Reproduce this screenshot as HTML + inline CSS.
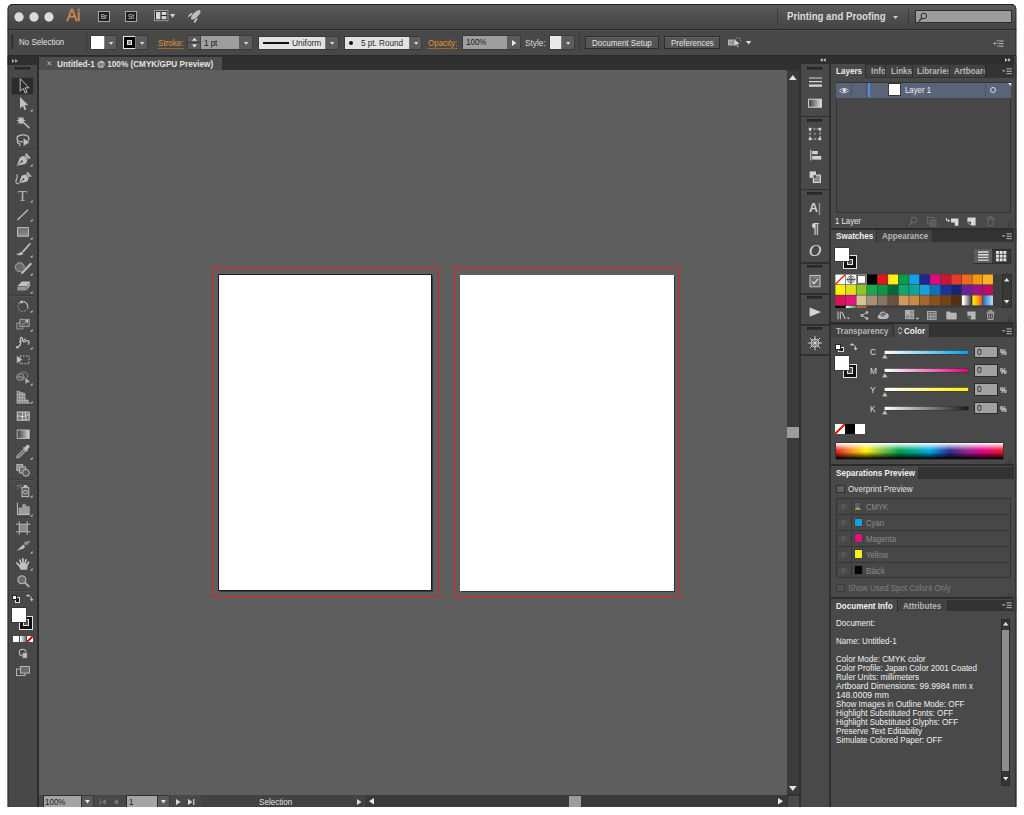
<!DOCTYPE html>
<html lang="en"><head><meta charset="utf-8"><title>Untitled-1 @ 100% (CMYK/GPU Preview)</title>
<style>
html,body{margin:0;padding:0;background:#fff}
body{width:1024px;height:815px;position:relative;overflow:hidden;font-family:"Liberation Sans",sans-serif;font-size:8px;color:#e4e4e4}
#win{position:absolute;left:0;top:0;width:1024px;height:815px;background:#484848;clip-path:inset(4px 7.700px 8px 7.600px round 5px 5px 0 0);overflow:hidden}
#win div,#win span,#win svg{position:absolute}
#win svg{overflow:visible}
.t,.u{white-space:nowrap;line-height:12px;height:12px;font-size:8px}
.t{font-size:9.12px;transform:scaleX(.877);transform-origin:0 50%}
.b{font-weight:bold}
</style></head>
<body>
<div id="win">
<!-- frame -->
<div style="left:0px;top:4px;width:1024px;height:25.5px;background:linear-gradient(#5b5b5b,#4f4f4f 45%,#444);border-top:1px solid #3a3a3a;box-sizing:border-box"></div>
<div style="left:0px;top:29px;width:1024px;height:1px;background:#262626"></div>
<div style="left:0px;top:30px;width:1024px;height:25px;background:#484848;border-top:1px solid #505050;box-sizing:border-box"></div>
<div style="left:0px;top:55px;width:1024px;height:1.5px;background:#2a2a2a"></div>
<div style="left:0px;top:56px;width:37px;height:751px;background:#484848"></div>
<div style="left:0px;top:56px;width:37px;height:8.5px;background:#2f2f2f"></div>
<div style="left:37px;top:56px;width:2px;height:751px;background:#2b2b2b"></div>
<div style="left:39px;top:56px;width:762px;height:14.5px;background:#303030"></div>
<div style="left:39px;top:57px;width:183px;height:13px;background:#4e4e4e;border-right:1px solid #2a2a2a"></div>
<div style="left:39px;top:70px;width:748px;height:725px;background:#5e5e5e"></div>
<div style="left:39px;top:795px;width:762px;height:12px;background:#484848"></div>
<div style="left:787px;top:70px;width:12px;height:725px;background:#3b3b3b"></div>
<div style="left:799px;top:56px;width:2px;height:751px;background:#2f2f2f"></div>
<div style="left:787px;top:427px;width:12px;height:11px;background:#9c9c9c"></div>
<div style="left:801px;top:56px;width:28px;height:751px;background:#494949"></div>
<div style="left:801px;top:56px;width:223px;height:8px;background:#2e2e2e"></div>
<div style="left:829px;top:56px;width:2px;height:751px;background:#2f2f2f"></div>
<div style="left:831px;top:64px;width:193px;height:743px;background:#494949"></div>
<div style="left:212px;top:267px;width:227px;height:330px;border:1px solid #d22;border-top:2px solid #a83c3c;border-bottom:1px solid #e02020;box-sizing:border-box"></div>
<div style="left:454px;top:267px;width:226px;height:330px;border:1px solid #d22;border-top:2px solid #a83c3c;border-bottom:1px solid #e02020;box-sizing:border-box"></div>
<div style="left:218.3px;top:274.2px;width:213.7px;height:316.8px;background:#fff;border:1px solid #1c1c1c;box-sizing:border-box;box-shadow:.6px .6px 1px rgba(0,0,0,.4)"></div>
<div style="left:460px;top:274.5px;width:214.3px;height:316px;background:#fff;box-shadow:0 0 1px 0.5px rgba(40,40,40,.8)"></div>
<!-- bars -->
<svg style="left:14px;top:12.3px" width="10" height="10" viewBox="0 0 10 10" ><circle cx="5" cy="5" r="4.650" fill="#dcdcdc"/></svg>
<svg style="left:29px;top:12.3px" width="10" height="10" viewBox="0 0 10 10" ><circle cx="5" cy="5" r="4.650" fill="#dcdcdc"/></svg>
<svg style="left:44px;top:12.3px" width="10" height="10" viewBox="0 0 10 10" ><circle cx="5" cy="5" r="4.650" fill="#dcdcdc"/></svg>
<span class="u" style="left:66.3px;top:5.300px;font-size:16.600px;line-height:22px;height:22px;color:#c98a55;letter-spacing:-0.5px;-webkit-text-stroke:.35px #c98a55">Ai</span>
<div style="left:97.8px;top:10.6px;width:12.3px;height:11.4px;background:#1f1f1f;border:1px solid #a8a8a8;box-sizing:border-box"><span class="u" style="left:0;top:0;width:10.3px;text-align:center;font-size:6.6px;line-height:9.6px;height:9.6px;color:#d4d4d4">Br</span></div>
<div style="left:124.9px;top:10.6px;width:12.3px;height:11.4px;background:#1f1f1f;border:1px solid #a8a8a8;box-sizing:border-box"><span class="u" style="left:0;top:0;width:10.3px;text-align:center;font-size:6.6px;line-height:9.6px;height:9.6px;color:#d4d4d4">St</span></div>
<svg style="left:153.8px;top:9.8px" width="14.4" height="11.2" viewBox="0 0 14.4 11.2" ><rect x=".5" y=".5" width="13.4" height="10.2" fill="#2e2e2e" stroke="#9c9c9c"/><rect x="2" y="1.9" width="4.4" height="7.4" fill="#d6d6d6"/><rect x="7.6" y="1.9" width="4.8" height="3.1" fill="#d6d6d6"/><rect x="7.600" y="6.100" width="4.800" height="3.200" fill="#d6d6d6"/></svg>
<svg style="left:169.8px;top:14.2px" width="5.2" height="3.8" viewBox="0 0 5.2 3.8" ><path d="M0 0h5.200L2.600 3.800z" fill="#d4d4d4"/></svg>
<svg style="left:186px;top:8px" width="16" height="16" viewBox="0 0 16 16" ><g fill="#bebebe"><ellipse cx="9.800" cy="6.800" rx="6.300" ry="2.500" transform="rotate(-45 9.800 6.800)"/><ellipse cx="4.300" cy="7" rx="2.700" ry="1" transform="rotate(-38 4.300 7)"/><ellipse cx="9.600" cy="12.300" rx="2.900" ry="1.100" transform="rotate(-55 9.600 12.300)"/></g></svg>
<div style="left:776.5px;top:9px;width:1px;height:16px;background:#3a3a3a"></div>
<span class="t b" style="left:786.5px;top:10px;font-size:11px;color:#dcdcdc">Printing and Proofing</span>
<svg style="left:892.8px;top:15.5px" width="5" height="3" viewBox="0 0 5 3" ><path d="M0 0h5L2.5 3z" fill="#d0d0d0"/></svg>
<div style="left:908px;top:9px;width:1px;height:16px;background:#3a3a3a"></div>
<div style="left:914.5px;top:10px;width:97.2px;height:13.4px;background:#9c9c9c;border:1px solid #2e2e2e;box-sizing:border-box"></div>
<svg style="left:917.5px;top:12px" width="10" height="10" viewBox="0 0 10 10" ><circle cx="5.8" cy="4" r="2.8" fill="none" stroke="#2a2a2a" stroke-width="1"/><path d="M3.8 6.2L.8 9.4" stroke="#2a2a2a" stroke-width="1.3"/></svg>
<svg style="left:11.2px;top:35px" width="3" height="15" viewBox="0 0 3 15" ><rect x="0" y="0.20" width="2.600" height="1" fill="#202020"/><rect x="0" y="2.25" width="2.600" height="1" fill="#202020"/><rect x="0" y="4.30" width="2.600" height="1" fill="#202020"/><rect x="0" y="6.35" width="2.600" height="1" fill="#202020"/><rect x="0" y="8.40" width="2.600" height="1" fill="#202020"/><rect x="0" y="10.45" width="2.600" height="1" fill="#202020"/><rect x="0" y="12.50" width="2.600" height="1" fill="#202020"/></svg>
<span class="t" style="left:18.8px;top:35.9px;color:#dfe3e8">No Selection</span>
<div style="left:86px;top:33px;width:1px;height:19px;background:#3a3a3a"></div>
<div style="left:91.4px;top:35.8px;width:13.8px;height:13.2px;background:#fff;box-shadow:0 0 0 0.6px #333"></div>
<div style="left:105.2px;top:35.8px;width:11.3px;height:13.2px;background:#5c5c5c;box-shadow:0 0 0 0.6px #333"></div>
<svg style="left:108.65px;top:41.5px" width="4.4" height="2.8" viewBox="0 0 4.4 2.8" ><path d="M0 0h4.400L2.200 2.800z" fill="#dedede"/></svg>
<div style="left:122.7px;top:35.8px;width:13.6px;height:13.2px;background:#000;border:1px solid #e8e8e8;box-sizing:border-box"><div style="left:3.3px;top:3.2px;width:5.5px;height:5.2px;border:1px solid #ddd;background:#888;box-sizing:border-box"></div>
</div>
<div style="left:136.3px;top:35.8px;width:11.2px;height:13.2px;background:#5c5c5c;box-shadow:0 0 0 0.6px #333"></div>
<svg style="left:139.7px;top:41.5px" width="4.4" height="2.8" viewBox="0 0 4.4 2.8" ><path d="M0 0h4.400L2.200 2.800z" fill="#dedede"/></svg>
<span class="t" style="left:157.8px;top:36.6px;color:#e8922a;border-bottom:1px dotted #e8922a;height:11px;line-height:12px;font-size:9.234px">Stroke:</span>
<div style="left:187.7px;top:35.8px;width:13.3px;height:13.2px;background:#5c5c5c;box-shadow:0 0 0 0.6px #333"></div>
<div style="left:187.7px;top:42.1px;width:13.3px;height:0.8px;background:#3a3a3a"></div>
<svg style="left:191.8px;top:37.8px" width="5" height="9.4" viewBox="0 0 5 9.4" ><path d="M0 2.8h5L2.5 0zM0 6.6h5L2.5 9.4z" fill="#e8e8e8"/></svg>
<div style="left:201px;top:35.8px;width:39.4px;height:13.2px;background:#9e9e9e;box-shadow:0 0 0 0.6px #333"></div>
<span class="t" style="left:204px;top:36.5px;color:#1a1a1a">1 pt</span>
<div style="left:240.4px;top:35.8px;width:11.6px;height:13.2px;background:#5c5c5c;box-shadow:0 0 0 0.6px #333"></div>
<svg style="left:244px;top:41.5px" width="4.4" height="2.8" viewBox="0 0 4.4 2.8" ><path d="M0 0h4.400L2.200 2.800z" fill="#dedede"/></svg>
<div style="left:258.8px;top:36.7px;width:67.3px;height:11.9px;background:#e2e2e2;box-shadow:0 0 0 0.6px #333"></div>
<div style="left:263.2px;top:41.6px;width:25.5px;height:2px;background:#111"></div>
<span class="t" style="left:292.2px;top:36.6px;color:#2a2a2a;font-size:9.576px">Uniform</span>
<div style="left:326.1px;top:36.7px;width:11.9px;height:11.9px;background:#5c5c5c;box-shadow:0 0 0 0.6px #333"></div>
<svg style="left:329.85px;top:41.75px" width="4.4" height="2.8" viewBox="0 0 4.4 2.8" ><path d="M0 0h4.400L2.200 2.800z" fill="#dedede"/></svg>
<div style="left:344.6px;top:36.7px;width:65.7px;height:11.9px;background:#e2e2e2;box-shadow:0 0 0 0.6px #333"></div>
<div style="left:349px;top:40.6px;width:4px;height:4px;background:#111;border-radius:50%"></div>
<span class="t" style="left:360.7px;top:36.6px;color:#2a2a2a;font-size:9.291px">5 pt. Round</span>
<div style="left:410.3px;top:36.7px;width:11.2px;height:11.9px;background:#5c5c5c;box-shadow:0 0 0 0.6px #333"></div>
<svg style="left:413.7px;top:41.75px" width="4.4" height="2.8" viewBox="0 0 4.4 2.8" ><path d="M0 0h4.400L2.200 2.800z" fill="#dedede"/></svg>
<span class="t" style="left:428.4px;top:36.6px;color:#e8922a;border-bottom:1px dotted #e8922a;height:11px;line-height:12px">Opacity:</span>
<div style="left:463.4px;top:35.8px;width:44.5px;height:13.2px;background:#9e9e9e;box-shadow:0 0 0 0.6px #333"></div>
<span class="t" style="left:465.5px;top:36.3px;color:#1a1a1a">100%</span>
<div style="left:507.9px;top:35.8px;width:11.7px;height:13.2px;background:#5c5c5c;box-shadow:0 0 0 0.6px #333"></div>
<svg style="left:512px;top:39.6px" width="4.4" height="6" viewBox="0 0 4.4 6" ><path d="M0 0v6L4.4 3z" fill="#e8e8e8"/></svg>
<span class="t" style="left:524.9px;top:36.6px;color:#dcdcdc;font-size:9.462px">Style:</span>
<div style="left:549.7px;top:35.8px;width:12.3px;height:13.2px;background:#e9e9e9;box-shadow:0 0 0 0.6px #333"></div>
<div style="left:562px;top:35.8px;width:12px;height:13.2px;background:#5c5c5c;box-shadow:0 0 0 0.6px #333"></div>
<svg style="left:565.8px;top:41.5px" width="4.4" height="2.8" viewBox="0 0 4.4 2.8" ><path d="M0 0h4.400L2.200 2.800z" fill="#dedede"/></svg>
<div style="left:579.3px;top:33px;width:1px;height:19px;background:#3a3a3a"></div>
<div style="left:584.8px;top:36.4px;width:74.2px;height:12.3px;background:#555;border:1px solid #2c2c2c;box-sizing:border-box;box-shadow:inset 0 1px 0 #666"></div>
<span class="t" style="left:592.2px;top:36.5px;color:#e2e2e2;font-size:9.177px">Document Setup</span>
<div style="left:664.3px;top:36.4px;width:55.7px;height:12.3px;background:#555;border:1px solid #2c2c2c;box-sizing:border-box;box-shadow:inset 0 1px 0 #666"></div>
<span class="t" style="left:670.7px;top:36.5px;color:#e2e2e2;font-size:9.063px">Preferences</span>
<svg style="left:728px;top:36.5px" width="14" height="12" viewBox="0 0 14 12" ><rect x=".5" y="3" width="7" height="5" fill="#9a9a9a" stroke="#c8c8c8" stroke-width=".8"/><path d="M6 2.2l6.2 4.6-2.8.3 1.4 3-1.2.5-1.4-3-2.2 1.9z" fill="#d8d8d8" stroke="#444" stroke-width=".4"/><path d="M8 1l4.5 0M12.5 1v3" stroke="#aaa" stroke-width=".8" fill="none" stroke-dasharray="1.2 1"/></svg>
<svg style="left:745.8px;top:40.6px" width="5.2" height="3.6" viewBox="0 0 5.2 3.6" ><path d="M0 0h5.2L2.6 3.6z" fill="#e0e0e0"/></svg>
<svg style="left:992.5px;top:39.5px" width="11" height="8" viewBox="0 0 11 8" ><path d="M0 2.800h3.400L1.700 4.800z" fill="#c4c4c4"/><path d="M5.400 1h5.200M5.400 3.600h5.200M5.400 6.200h5.200" stroke="#b8b8b8" stroke-width="1"/><path d="M4.200 0v7.200" stroke="#b8b8b8" stroke-width=".9" stroke-dasharray="1.200 1.400"/></svg>
<!-- tools -->
<svg style="left:11.8px;top:58.6px" width="6.4" height="3.8" viewBox="0 0 6.4 3.8" ><path d="M0 0v3.800L2.600 1.900zM3.200 0v3.800L5.800 1.900z" fill="#b8b8b8"/></svg>
<svg style="left:15px;top:67.3px" width="16" height="3" viewBox="0 0 16 3" ><rect x="0.00" y="0" width="1.900" height="2.600" fill="#1c1c1c"/><rect x="2.60" y="0" width="1.900" height="2.600" fill="#1c1c1c"/><rect x="5.20" y="0" width="1.900" height="2.600" fill="#1c1c1c"/><rect x="7.80" y="0" width="1.900" height="2.600" fill="#1c1c1c"/><rect x="10.40" y="0" width="1.900" height="2.600" fill="#1c1c1c"/><rect x="13.00" y="0" width="1.900" height="2.600" fill="#1c1c1c"/></svg>
<div style="left:12px;top:78px;width:20.7px;height:15.6px;background:#2c2c2c;box-shadow:0 0 0 .6px #3a3a3a"></div>
<svg style="left:12.5px;top:76.5px" width="20" height="18" viewBox="0 0 20 18" ><path d="M7.2 1.6v12.6l3-2.8 2 4.6 1.8-.8-2-4.4h4z" fill="#2a2a2a" stroke="#c0c0c0" stroke-width="1" stroke-linejoin="miter"/></svg>
<svg style="left:12.5px;top:94.9px" width="20" height="18" viewBox="0 0 20 18" ><path d="M7 2v11.6l2.8-2.6 1.8 4.2 1.7-.7-1.8-4.2h3.8z" fill="#c0c0c0"/></svg>
<svg style="left:29.6px;top:108.5px" width="2.6" height="2.6" viewBox="0 0 2.6 2.6" ><path d="M2.6 0v2.6H0z" fill="#c0c0c0"/></svg>
<svg style="left:12.5px;top:112.5px" width="20" height="18" viewBox="0 0 20 18" ><path d="M8 3l.9 2.4L11.6 4 10.3 6.6l2.5.8-2.5.9 1 2.6-2.4-1.2L8 12.2l-.8-2.5-2.6 1.1 1.2-2.5-2.6-.9 2.6-.9L4.5 4l2.6 1.3z" fill="#c0c0c0"/><path d="M10 9l6 5.6" stroke="#c0c0c0" stroke-width="1.5" stroke-linecap="round"/></svg>
<svg style="left:12.5px;top:131.7px" width="20" height="18" viewBox="0 0 20 18" ><ellipse cx="9.900" cy="6.400" rx="6" ry="3.500" fill="none" stroke="#c0c0c0" stroke-width="1.300"/><path d="M4.700 8.800c-1 1.400-.2 2.400 1.200 2.600s1.400 1.600.4 2.800" fill="none" stroke="#c0c0c0" stroke-width="1.100"/><path d="M10.300 5.800v8.400l6.200-3.700z" fill="#c0c0c0" stroke="#484848" stroke-width=".5"/></svg>
<div style="left:11px;top:149px;width:23px;height:1px;background:#3c3c3c"></div>
<div style="left:11px;top:150px;width:23px;height:1px;background:#525252"></div>
<svg style="left:12.5px;top:150.8px" width="20" height="18" viewBox="0 0 20 18" ><g transform="translate(9.6,9.7) rotate(49) scale(1)"><rect x="-3.300" y="-7.800" width="6.600" height="1.700" fill="#c0c0c0"/><rect x="-2.300" y="-5.600" width="4.600" height="1.300" fill="#c0c0c0"/><path d="M-2.700 -3.900h5.400c.9 1.200 1.500 2.600 1.300 4.200L0 8-4 .3c-.2-1.600.4-3 1.300-4.200z" fill="#c0c0c0"/><circle cx="0" cy="1" r="1.050" fill="#3e3e3e"/><path d="M0 2v5.600" stroke="#3e3e3e" stroke-width=".7"/></g></svg>
<svg style="left:29.6px;top:164.4px" width="2.6" height="2.6" viewBox="0 0 2.6 2.6" ><path d="M2.6 0v2.6H0z" fill="#c0c0c0"/></svg>
<svg style="left:12.5px;top:169.2px" width="20" height="18" viewBox="0 0 20 18" ><g transform="translate(11.2,9.7) rotate(49) scale(0.92)"><rect x="-3.300" y="-7.800" width="6.600" height="1.700" fill="#c0c0c0"/><rect x="-2.300" y="-5.600" width="4.600" height="1.300" fill="#c0c0c0"/><path d="M-2.700 -3.900h5.400c.9 1.200 1.500 2.600 1.300 4.200L0 8-4 .3c-.2-1.600.4-3 1.300-4.200z" fill="#c0c0c0"/><circle cx="0" cy="1" r="1.050" fill="#3e3e3e"/><path d="M0 2v5.600" stroke="#3e3e3e" stroke-width=".7"/></g><path d="M3.900 5.300c1.600 2.600-.8 4.400-1 7-.1 2 1.200 2.800 3 2.300" fill="none" stroke="#c0c0c0" stroke-width="1.100"/></svg>
<span class="u" style="left:12.5px;top:184.5px;width:20px;text-align:center;font-family:'Liberation Serif',serif;font-size:15.5px;line-height:22px;height:22px;color:#b4b4b4">T</span>
<svg style="left:29.6px;top:200.1px" width="2.6" height="2.6" viewBox="0 0 2.6 2.6" ><path d="M2.6 0v2.600H0z" fill="#c0c0c0"/></svg>
<svg style="left:12.5px;top:205.6px" width="20" height="18" viewBox="0 0 20 18" ><path d="M4.400 14L15 3.800" stroke="#c0c0c0" stroke-width="1.200"/></svg>
<svg style="left:29.6px;top:219.2px" width="2.6" height="2.6" viewBox="0 0 2.6 2.6" ><path d="M2.6 0v2.6H0z" fill="#c0c0c0"/></svg>
<svg style="left:12.5px;top:223.3px" width="20" height="18" viewBox="0 0 20 18" ><defs><linearGradient id="rg" x1="0" y1="0" x2="0" y2="1"><stop offset="0" stop-color="#6a6a6a"/><stop offset="1" stop-color="#8c8c8c"/></linearGradient></defs><rect x="4.600" y="4.600" width="10.800" height="8.600" fill="url(#rg)" stroke="#c0c0c0" stroke-width="1"/></svg>
<svg style="left:29.6px;top:236.9px" width="2.6" height="2.6" viewBox="0 0 2.6 2.6" ><path d="M2.6 0v2.6H0z" fill="#c0c0c0"/></svg>
<svg style="left:12.5px;top:241.4px" width="20" height="18" viewBox="0 0 20 18" ><path d="M10.200 10.400l6.800-7.600" stroke="#c0c0c0" stroke-width="1.700" stroke-linecap="round"/><path d="M3 12.800c2.400.2 3.800-.6 4.900-2.400l2.500 1.800c-1.500 2.500-4.800 2.900-7.400.6z" fill="#c0c0c0"/></svg>
<svg style="left:29.6px;top:255px" width="2.6" height="2.6" viewBox="0 0 2.6 2.6" ><path d="M2.6 0v2.6H0z" fill="#c0c0c0"/></svg>
<svg style="left:12.5px;top:259.4px" width="20" height="18" viewBox="0 0 20 18" ><circle cx="6.800" cy="8.200" r="4.500" fill="#6c6c6c" stroke="#a8a8a8" stroke-width="1"/><path d="M9 14.200l8.600-9" stroke="#484848" stroke-width="3.400"/><path d="M9.800 13.300l7.800-8.200" stroke="#c0c0c0" stroke-width="2.100" stroke-linecap="square"/><path d="M7.700 15.300l1-2.700 1.500 1.500z" fill="#c0c0c0"/></svg>
<svg style="left:29.6px;top:273px" width="2.6" height="2.6" viewBox="0 0 2.6 2.6" ><path d="M2.6 0v2.6H0z" fill="#c0c0c0"/></svg>
<svg style="left:12.5px;top:277px" width="20" height="18" viewBox="0 0 20 18" ><path d="M8.800 4.400h7.400c.8 0 1.100.5.600 1.100l-3.200 3.800H4.400z" fill="#c0c0c0"/><path d="M4.300 9.700h9v3.800h-8c-.7 0-1-.4-1-1z" fill="#959595"/><path d="M13.700 9.600l3.500-4.200v3.400l-3.500 4.400z" fill="#a8a8a8"/></svg>
<svg style="left:29.6px;top:290.6px" width="2.6" height="2.6" viewBox="0 0 2.6 2.6" ><path d="M2.6 0v2.6H0z" fill="#c0c0c0"/></svg>
<div style="left:11px;top:295px;width:23px;height:1px;background:#3c3c3c"></div>
<div style="left:11px;top:296px;width:23px;height:1px;background:#525252"></div>
<svg style="left:12.5px;top:296.5px" width="20" height="18" viewBox="0 0 20 18" ><circle cx="9.900" cy="9.600" r="4.900" fill="none" stroke="#9c9c9c" stroke-width="1" stroke-dasharray="1.700 1.500" transform="rotate(14 9.900 9.600)"/><path d="M8.600 4.900A4.900 4.900 0 0 1 14.700 10.600" fill="none" stroke="#c0c0c0" stroke-width="1.100"/><path d="M5.800 5.400l3.600-2.400.4 3.600z" fill="#c0c0c0"/></svg>
<svg style="left:29.6px;top:310.1px" width="2.6" height="2.6" viewBox="0 0 2.6 2.6" ><path d="M2.6 0v2.6H0z" fill="#c0c0c0"/></svg>
<svg style="left:12.5px;top:315.2px" width="20" height="18" viewBox="0 0 20 18" ><rect x="3.800" y="8" width="6" height="6" fill="#555" stroke="#a4a4a4" stroke-width=".8"/><rect x="6.900" y="4.300" width="9.300" height="7" fill="#5c5c5c" stroke="#b4b4b4" stroke-width=".8"/><path d="M9.400 9.800l4.600-3.800" stroke="#a4a4a4" stroke-width=".9" fill="none"/><path d="M12 5.300h3v2.800z" fill="#dcdcdc"/></svg>
<svg style="left:29.6px;top:328.8px" width="2.6" height="2.6" viewBox="0 0 2.6 2.6" ><path d="M2.6 0v2.6H0z" fill="#c0c0c0"/></svg>
<svg style="left:12.5px;top:333.3px" width="20" height="18" viewBox="0 0 20 18" ><path d="M3.800 14.400c2-.2 3.200-1.600 3.800-3.600.5-1.800-.8-3.400-.2-5.400.3-.800 1-1.200 1.600-.600 1 1 .2 3.200 1.400 4 1.600 1 3.200-2.400 5-1 1.200 1 .600 2.800-.4 3.600" fill="none" stroke="#c0c0c0" stroke-width="1.250"/><circle cx="4.200" cy="14.200" r="1.200" fill="#c0c0c0"/><path d="M7 8.800l5-2.400" stroke="#c0c0c0" stroke-width=".8"/><circle cx="7" cy="8.800" r=".9" fill="#c0c0c0"/><circle cx="12" cy="6.400" r=".9" fill="#c0c0c0"/></svg>
<svg style="left:29.6px;top:346.9px" width="2.6" height="2.6" viewBox="0 0 2.6 2.6" ><path d="M2.6 0v2.6H0z" fill="#c0c0c0"/></svg>
<svg style="left:12.5px;top:351.4px" width="20" height="18" viewBox="0 0 20 18" ><rect x="7.200" y="5" width="8.800" height="7.700" fill="none" stroke="#c0c0c0" stroke-width="1" stroke-dasharray="1.500 1.300"/><path d="M3.700 4.600v8l5.800-3.900z" fill="#c0c0c0" stroke="#484848" stroke-width=".4"/></svg>
<svg style="left:12.5px;top:369px" width="20" height="18" viewBox="0 0 20 18" ><ellipse cx="7.400" cy="8" rx="3.800" ry="3.300" fill="none" stroke="#a4a4a4" stroke-width=".9"/><ellipse cx="10.600" cy="6.600" rx="4.200" ry="3.400" fill="none" stroke="#8e8e8e" stroke-width=".9"/><path d="M4 8h7" stroke="#a4a4a4" stroke-width=".9"/><path d="M12.200 8.800l.3 6.800 1.800-2.300 3.200-.3z" fill="#c0c0c0" stroke="#484848" stroke-width=".4"/></svg>
<svg style="left:29.6px;top:382.6px" width="2.6" height="2.6" viewBox="0 0 2.6 2.6" ><path d="M2.6 0v2.6H0z" fill="#c0c0c0"/></svg>
<svg style="left:12.5px;top:387.8px" width="20" height="18" viewBox="0 0 20 18" ><path d="M4 3l8 2.700v4.500l4.600 3v2H4z" fill="#7e7e7e"/><path d="M4 3v12.200M6.700 3.900v11.300M9.300 4.800v10.400M12 5.700v9.500M14.300 11.800v3.400M4 6.600h8M4 9.800h8M4 12.600h11.400M4 15.200h12.800M4 3l8 2.700" stroke="#c0c0c0" stroke-width=".7" fill="none"/></svg>
<svg style="left:29.6px;top:401.4px" width="2.6" height="2.6" viewBox="0 0 2.6 2.6" ><path d="M2.6 0v2.6H0z" fill="#c0c0c0"/></svg>
<div style="left:11px;top:405px;width:23px;height:1px;background:#3c3c3c"></div>
<div style="left:11px;top:406px;width:23px;height:1px;background:#525252"></div>
<svg style="left:12.5px;top:407.2px" width="20" height="18" viewBox="0 0 20 18" ><rect x="4.200" y="5" width="12" height="8.200" fill="#777" stroke="#d8d8d8" stroke-width=".9"/><path d="M4.200 9.400c3-1.800 4.600 1.800 7.400-.2s3-1.600 4.600-.800M9 5c1.800 3-1.200 5 .8 8.200M12.600 5c-1.400 2.400 1.600 5 0 8.200" fill="none" stroke="#e0e0e0" stroke-width=".9"/></svg>
<svg style="left:12.5px;top:425.2px" width="20" height="18" viewBox="0 0 20 18" ><defs><linearGradient id="gg"><stop offset="0" stop-color="#3a3a3a"/><stop offset="1" stop-color="#d8d8d8"/></linearGradient></defs><rect x="4.200" y="5" width="12" height="8.400" fill="url(#gg)" stroke="#c0c0c0" stroke-width=".9"/></svg>
<svg style="left:12.5px;top:443.3px" width="20" height="18" viewBox="0 0 20 18" ><path d="M13.400 2.400a1.800 1.800 0 0 1 2.600 2.600l-1.800 1.800.7.700-1.200 1.200-3.800-3.800 1.200-1.200.7.700z" fill="#c0c0c0"/><path d="M10.400 6.400l2 2-6 6-2.200.800-.6-.6.800-2.200z" fill="#777" stroke="#c0c0c0" stroke-width=".9"/></svg>
<svg style="left:29.6px;top:456.9px" width="2.6" height="2.6" viewBox="0 0 2.6 2.6" ><path d="M2.6 0v2.6H0z" fill="#c0c0c0"/></svg>
<svg style="left:12.5px;top:461.4px" width="20" height="18" viewBox="0 0 20 18" ><rect x="3.800" y="3.600" width="6" height="6" fill="#8a8a8a" stroke="#c0c0c0" stroke-width=".9"/><rect x="6.600" y="6" width="6" height="6" fill="#707070" stroke="#c0c0c0" stroke-width=".9"/><circle cx="13" cy="11.800" r="3.400" fill="#5a5a5a" stroke="#c0c0c0" stroke-width="1"/></svg>
<div style="left:11px;top:479px;width:23px;height:1px;background:#3c3c3c"></div>
<div style="left:11px;top:480px;width:23px;height:1px;background:#525252"></div>
<svg style="left:12.5px;top:481.6px" width="20" height="18" viewBox="0 0 20 18" ><rect x="9" y="5.600" width="6.800" height="9" fill="#5a5a5a" stroke="#c0c0c0" stroke-width="1"/><rect x="10.600" y="3" width="3.600" height="2.200" fill="#c0c0c0"/><circle cx="12.400" cy="10.200" r="1.900" fill="none" stroke="#c0c0c0" stroke-width="1"/><path d="M4 4.400l1.200-1.200M6.400 3.600l1.400-1M4.600 6.600l1-.8M7.400 5l1-.6" stroke="#c0c0c0" stroke-width=".9"/></svg>
<svg style="left:29.6px;top:495.2px" width="2.6" height="2.6" viewBox="0 0 2.6 2.6" ><path d="M2.6 0v2.6H0z" fill="#c0c0c0"/></svg>
<svg style="left:12.5px;top:500px" width="20" height="18" viewBox="0 0 20 18" ><path d="M4.400 2.600v12h12.400" fill="none" stroke="#c0c0c0" stroke-width="1"/><rect x="6" y="8" width="2.800" height="6" fill="#9a9a9a" stroke="#c0c0c0" stroke-width=".6"/><rect x="9.800" y="4.800" width="2.800" height="9.200" fill="#9a9a9a" stroke="#c0c0c0" stroke-width=".6"/><rect x="13.600" y="6.800" width="2.600" height="7.200" fill="#9a9a9a" stroke="#c0c0c0" stroke-width=".6"/></svg>
<svg style="left:29.6px;top:513.6px" width="2.6" height="2.6" viewBox="0 0 2.6 2.6" ><path d="M2.6 0v2.6H0z" fill="#c0c0c0"/></svg>
<div style="left:11px;top:517px;width:23px;height:1px;background:#3c3c3c"></div>
<div style="left:11px;top:518px;width:23px;height:1px;background:#525252"></div>
<svg style="left:12.5px;top:518.7px" width="20" height="18" viewBox="0 0 20 18" ><rect x="6.200" y="5.200" width="8" height="7.600" fill="#8a8a8a" stroke="#c0c0c0" stroke-width=".9"/><path d="M6.200 2.200v3M14.200 2.200v3M6.200 12.800v3M14.200 12.800v3M3 5.200h3.200M14.200 5.200h3.200M3 12.800h3.200M14.200 12.800h3.200" stroke="#c0c0c0" stroke-width=".9"/></svg>
<svg style="left:12.5px;top:537px" width="20" height="18" viewBox="0 0 20 18" ><path d="M11.600 4.800l6.200-1-3.800 4.500-3.100-.7z" fill="#8e8e8e"/><path d="M3.700 13.800l6.600-6.200 1.700 1.700-1.100 2.200z" fill="#c0c0c0"/></svg>
<svg style="left:29.6px;top:550.6px" width="2.6" height="2.6" viewBox="0 0 2.6 2.6" ><path d="M2.6 0v2.6H0z" fill="#c0c0c0"/></svg>
<svg style="left:12.5px;top:554.8px" width="20" height="18" viewBox="0 0 20 18" ><path d="M7.400 14.800h6.700l.6-4.300-2.700-2.300h-4l-2 2.300z" fill="#c0c0c0"/><path d="M8.600 10.200L6.900 5M10 9.600L9.900 3.600M11.700 9.800L13 4.800M13.200 11l2.400-3.800M7.700 12.200L3.800 8" stroke="#c0c0c0" stroke-width="1.700" stroke-linecap="round"/></svg>
<svg style="left:29.6px;top:568.4px" width="2.6" height="2.6" viewBox="0 0 2.6 2.6" ><path d="M2.6 0v2.6H0z" fill="#c0c0c0"/></svg>
<svg style="left:12.5px;top:572.4px" width="20" height="18" viewBox="0 0 20 18" ><circle cx="8.900" cy="7.800" r="3.900" fill="#6a6a6a" stroke="#b0b0b0" stroke-width="1.300"/><path d="M12 10.800l3.800 3.600" stroke="#b0b0b0" stroke-width="1.900" stroke-linecap="round"/></svg>
<div style="left:11px;top:590px;width:23px;height:1px;background:#3c3c3c"></div>
<div style="left:11px;top:591px;width:23px;height:1px;background:#525252"></div>
<div style="left:14.6px;top:597.4px;width:5.4px;height:5.4px;background:#1c1c1c;border:.8px solid #ddd;box-sizing:border-box"></div>
<div style="left:12px;top:594.8px;width:5.4px;height:5.4px;background:#fff;border:.8px solid #222;box-sizing:border-box"></div>
<svg style="left:26px;top:594px" width="8" height="8.5" viewBox="0 0 8 8.5" ><path d="M1.400 1.600c2.600-.4 4.400 1.400 4.200 4" fill="none" stroke="#c0c0c0" stroke-width="1"/><path d="M0 1.600L2.400 0v3.200zM3.800 5h3.800L5.700 7.600z" fill="#c0c0c0"/></svg>
<div style="left:19.1px;top:615.8px;width:14.1px;height:14.1px;background:#111;border:1.100px solid #e4e4e4;box-sizing:border-box"><div style="left:2.7px;top:2.7px;width:6.5px;height:6.5px;background:#555;border:1px solid #e4e4e4;box-sizing:border-box"></div>
</div>
<div style="left:11.8px;top:608.4px;width:14.4px;height:13.6px;background:#fff;box-shadow:0 0 0 .7px #333"></div>
<div style="left:13px;top:636px;width:6.2px;height:5.6px;background:#fff"></div>
<div style="left:19.9px;top:636px;width:6.1px;height:5.6px;background:linear-gradient(90deg,#fff,#707070)"></div>
<div style="left:26.6px;top:636px;width:6.2px;height:5.6px;background:linear-gradient(135deg,#fff 40%,#e11 40%,#e11 60%,#fff 60%)"></div>
<svg style="left:18px;top:647.5px" width="10" height="11" viewBox="0 0 10 11" ><circle cx="4.600" cy="4.600" r="3.300" fill="none" stroke="#c0c0c0" stroke-width="1.100"/><rect x="4.200" y="4.800" width="5" height="5.400" fill="#bdbdbd" stroke="#484848" stroke-width=".6"/></svg>
<svg style="left:15.5px;top:665.5px" width="14" height="11" viewBox="0 0 14 11" ><rect x=".5" y="3" width="8.600" height="6.600" fill="#4a4a4a" stroke="#c0c0c0" stroke-width=".9"/><rect x="4.400" y=".5" width="9" height="6.600" fill="#6a6a6a" stroke="#c0c0c0" stroke-width=".9"/></svg>
<!-- doc -->
<svg style="left:47px;top:61.3px" width="4.6" height="4.6" viewBox="0 0 4.6 4.6" ><path d="M.3 .3l4 4M4.300 .3l-4 4" stroke="#c8c8c8" stroke-width=".9"/></svg>
<span class="t b" style="left:57.300px;top:57.900px;font-size:9.348px;color:#e2e2e2">Untitled-1 @ 100% (CMYK/GPU Preview)</span>
<svg style="left:789.2px;top:75.4px" width="7.6" height="4.8" viewBox="0 0 7.6 4.8" ><path d="M0 5h7.600L3.800 0z" fill="#e4e4e4"/></svg>
<svg style="left:789.2px;top:785.6px" width="7.6" height="4.8" viewBox="0 0 7.6 4.8" ><path d="M0 0h7.600L3.800 5z" fill="#e4e4e4"/></svg>
<div style="left:787px;top:795px;width:12px;height:12px;background:#4a4a4a;border-left:1px solid #333;border-top:1px solid #333;box-sizing:border-box"></div>
<div style="left:364.5px;top:795px;width:422.5px;height:1px;background:#2f2f2f"></div>
<div style="left:787px;top:794px;width:12px;height:1px;background:#2f2f2f"></div>
<div style="left:43px;top:795px;width:39px;height:12px;background:#a4a4a4;border:1px solid #2c2c2c;border-bottom:none;box-sizing:border-box"></div>
<span class="t" style="left:45.2px;top:795.8px;color:#1a1a1a">100%</span>
<div style="left:82px;top:795.5px;width:11.4px;height:11.5px;background:#5a5a5a;box-shadow:0 0 0 .6px #333"></div>
<svg style="left:85.4px;top:800.3px" width="4.8" height="3.4" viewBox="0 0 4.8 3.4" ><path d="M0 0h4.800L2.400 3.400z" fill="#e8e8e8"/></svg>
<svg style="left:99.6px;top:798.6px" width="6" height="6" viewBox="0 0 6 6" ><path d="M.3 0v6" stroke="#777" stroke-width="1.100"/><path d="M6 0v6L1.400 3z" fill="#777"/></svg>
<svg style="left:113px;top:798.6px" width="5" height="6" viewBox="0 0 5 6" ><path d="M5 0v6L.4 3z" fill="#777"/></svg>
<div style="left:126px;top:795px;width:32px;height:12px;background:#a4a4a4;border:1px solid #2c2c2c;border-bottom:none;box-sizing:border-box"></div>
<span class="t" style="left:128.6px;top:795.8px;color:#1a1a1a">1</span>
<div style="left:158px;top:795.5px;width:10.8px;height:11.5px;background:#5a5a5a;box-shadow:0 0 0 .6px #333"></div>
<svg style="left:160.8px;top:800.3px" width="4.8" height="3.4" viewBox="0 0 4.8 3.4" ><path d="M0 0h4.800L2.400 3.400z" fill="#e8e8e8"/></svg>
<svg style="left:176.2px;top:798.6px" width="5" height="6" viewBox="0 0 5 6" ><path d="M0 0v6L4.600 3z" fill="#d8d8d8"/></svg>
<svg style="left:187.6px;top:798.6px" width="6.4" height="6" viewBox="0 0 6.4 6" ><path d="M0 0v6L4.600 3z" fill="#d8d8d8"/><path d="M5.800 0v6" stroke="#d8d8d8" stroke-width="1.200"/></svg>
<div style="left:200.8px;top:795px;width:163.7px;height:12px;background:#424242"></div>
<span class="t" style="left:259.3px;top:796px;color:#e0e0e0;font-size:9.234px">Selection</span>
<svg style="left:356.6px;top:798.6px" width="4.6" height="6" viewBox="0 0 4.6 6" ><path d="M0 0v6L4.600 3z" fill="#d8d8d8"/></svg>
<div style="left:364.5px;top:795px;width:422.5px;height:12px;background:#3a3a3a"></div>
<svg style="left:369.4px;top:798.4px" width="5" height="6.4" viewBox="0 0 5 6.4" ><path d="M5 0v6.400L0 3.200z" fill="#e8e8e8"/></svg>
<svg style="left:777.6px;top:798.4px" width="5" height="6.4" viewBox="0 0 5 6.4" ><path d="M0 0v6.400L5 3.200z" fill="#e8e8e8"/></svg>
<div style="left:569.4px;top:796px;width:11.6px;height:11px;background:#9c9c9c"></div>
<svg style="left:820.4px;top:58.2px" width="6.4" height="3.8" viewBox="0 0 6.4 3.8" ><path d="M2.600 0v3.800L0 1.900zM5.800 0v3.800L3.200 1.900z" fill="#c8c8c8"/></svg>
<svg style="left:1004.6px;top:58.2px" width="6.4" height="3.8" viewBox="0 0 6.4 3.8" ><path d="M0 0v3.800L2.600 1.900zM3.200 0v3.800L5.800 1.900z" fill="#c8c8c8"/></svg>
<svg style="left:807px;top:67px" width="16" height="3" viewBox="0 0 16 3" ><rect x="0.00" y="0" width="1.900" height="2.600" fill="#1c1c1c"/><rect x="2.60" y="0" width="1.900" height="2.600" fill="#1c1c1c"/><rect x="5.20" y="0" width="1.900" height="2.600" fill="#1c1c1c"/><rect x="7.80" y="0" width="1.900" height="2.600" fill="#1c1c1c"/><rect x="10.40" y="0" width="1.900" height="2.600" fill="#1c1c1c"/><rect x="13.00" y="0" width="1.900" height="2.600" fill="#1c1c1c"/></svg>
<svg style="left:807px;top:74px" width="16" height="16" viewBox="0 0 16 16" ><path d="M2 4h13" stroke="#d4d4d4" stroke-width="1"/><path d="M2 7.600h13" stroke="#d4d4d4" stroke-width="1.400"/><path d="M2 11.700h13" stroke="#d4d4d4" stroke-width="2.200"/></svg>
<svg style="left:807px;top:95.4px" width="16" height="16" viewBox="0 0 16 16" ><defs><linearGradient id="dg"><stop offset="0" stop-color="#3a3a3a"/><stop offset="1" stop-color="#e0e0e0"/></linearGradient></defs><rect x="1.600" y="4.200" width="12.800" height="8" fill="url(#dg)" stroke="#d4d4d4" stroke-width="1"/></svg>
<div style="left:801px;top:115.6px;width:28px;height:1.6px;background:#2f2f2f"></div>
<svg style="left:807px;top:119px" width="16" height="3" viewBox="0 0 16 3" ><rect x="0.00" y="0" width="1.900" height="2.600" fill="#1c1c1c"/><rect x="2.60" y="0" width="1.900" height="2.600" fill="#1c1c1c"/><rect x="5.20" y="0" width="1.900" height="2.600" fill="#1c1c1c"/><rect x="7.80" y="0" width="1.900" height="2.600" fill="#1c1c1c"/><rect x="10.40" y="0" width="1.900" height="2.600" fill="#1c1c1c"/><rect x="13.00" y="0" width="1.900" height="2.600" fill="#1c1c1c"/></svg>
<svg style="left:807px;top:126.4px" width="16" height="16" viewBox="0 0 16 16" ><rect x="3" y="3" width="10" height="10" fill="none" stroke="#d4d4d4" stroke-width="1" stroke-dasharray="2 1.400"/><rect x="1.800" y="1.800" width="2.400" height="2.400" fill="#d4d4d4"/><rect x="11.800" y="1.800" width="2.400" height="2.400" fill="#d4d4d4"/><rect x="1.800" y="11.800" width="2.400" height="2.400" fill="#d4d4d4"/><rect x="11.800" y="11.800" width="2.400" height="2.400" fill="#d4d4d4"/><rect x="7.400" y="7.400" width="1.200" height="1.200" fill="#d4d4d4"/></svg>
<svg style="left:807px;top:147.4px" width="16" height="16" viewBox="0 0 16 16" ><path d="M3.800 2.800v10.600" stroke="#d4d4d4" stroke-width="1.100"/><rect x="5.200" y="4" width="5.600" height="3.200" fill="#d4d4d4"/><rect x="5.200" y="9" width="9" height="3.600" fill="#d4d4d4"/></svg>
<svg style="left:807px;top:168.6px" width="16" height="16" viewBox="0 0 16 16" ><rect x="2.600" y="2.400" width="6.400" height="6.400" fill="#d4d4d4"/><rect x="6.400" y="6.200" width="7" height="7.200" fill="#8c8c8c" stroke="#d4d4d4" stroke-width="1.200"/><rect x="6.400" y="6.200" width="2.600" height="2.600" fill="#555"/></svg>
<div style="left:801px;top:188.6px;width:28px;height:1.6px;background:#2f2f2f"></div>
<svg style="left:807px;top:192.1px" width="16" height="3" viewBox="0 0 16 3" ><rect x="0.00" y="0" width="1.900" height="2.600" fill="#1c1c1c"/><rect x="2.60" y="0" width="1.900" height="2.600" fill="#1c1c1c"/><rect x="5.20" y="0" width="1.900" height="2.600" fill="#1c1c1c"/><rect x="7.80" y="0" width="1.900" height="2.600" fill="#1c1c1c"/><rect x="10.40" y="0" width="1.900" height="2.600" fill="#1c1c1c"/><rect x="13.00" y="0" width="1.900" height="2.600" fill="#1c1c1c"/></svg>
<span class="u b" style="left:806px;top:199.300px;width:18px;text-align:center;font-size:12.400px;line-height:18px;height:18px;color:#d4d4d4">A<span style="position:static;font-weight:normal;margin-left:0;font-size:12.500px;color:#aaa">|</span></span>
<span class="u b" style="left:806.500px;top:219.400px;width:18px;text-align:center;font-size:14px;line-height:18px;height:18px;color:#d4d4d4">¶</span>
<span class="u" style="left:806px;top:241.300px;width:18px;text-align:center;font-family:'Liberation Serif',serif;font-style:italic;font-size:17.500px;line-height:18px;height:18px;color:#d4d4d4">O</span>
<div style="left:801px;top:262.3px;width:28px;height:1.6px;background:#2f2f2f"></div>
<svg style="left:807px;top:265.3px" width="16" height="3" viewBox="0 0 16 3" ><rect x="0.00" y="0" width="1.900" height="2.600" fill="#1c1c1c"/><rect x="2.60" y="0" width="1.900" height="2.600" fill="#1c1c1c"/><rect x="5.20" y="0" width="1.900" height="2.600" fill="#1c1c1c"/><rect x="7.80" y="0" width="1.900" height="2.600" fill="#1c1c1c"/><rect x="10.40" y="0" width="1.900" height="2.600" fill="#1c1c1c"/><rect x="13.00" y="0" width="1.900" height="2.600" fill="#1c1c1c"/></svg>
<svg style="left:807px;top:272.8px" width="16" height="16" viewBox="0 0 16 16" ><rect x="3" y="2.400" width="10" height="11.400" fill="#6a6a6a" stroke="#d4d4d4" stroke-width=".9"/><path d="M5 8.400l2 2.200 4-4.800" fill="none" stroke="#d4d4d4" stroke-width="1.400"/><path d="M5.400 4.200h5" stroke="#9a9a9a" stroke-width=".8"/></svg>
<div style="left:801px;top:293.3px;width:28px;height:1.6px;background:#2f2f2f"></div>
<svg style="left:807px;top:296.3px" width="16" height="3" viewBox="0 0 16 3" ><rect x="0.00" y="0" width="1.900" height="2.600" fill="#1c1c1c"/><rect x="2.60" y="0" width="1.900" height="2.600" fill="#1c1c1c"/><rect x="5.20" y="0" width="1.900" height="2.600" fill="#1c1c1c"/><rect x="7.80" y="0" width="1.900" height="2.600" fill="#1c1c1c"/><rect x="10.40" y="0" width="1.900" height="2.600" fill="#1c1c1c"/><rect x="13.00" y="0" width="1.900" height="2.600" fill="#1c1c1c"/></svg>
<svg style="left:807px;top:303.7px" width="16" height="16" viewBox="0 0 16 16" ><path d="M2.600 3.400v9.400L14 8.100z" fill="#d4d4d4"/></svg>
<div style="left:801px;top:324.3px;width:28px;height:1.6px;background:#2f2f2f"></div>
<svg style="left:807px;top:327.3px" width="16" height="3" viewBox="0 0 16 3" ><rect x="0.00" y="0" width="1.900" height="2.600" fill="#1c1c1c"/><rect x="2.60" y="0" width="1.900" height="2.600" fill="#1c1c1c"/><rect x="5.20" y="0" width="1.900" height="2.600" fill="#1c1c1c"/><rect x="7.80" y="0" width="1.900" height="2.600" fill="#1c1c1c"/><rect x="10.40" y="0" width="1.900" height="2.600" fill="#1c1c1c"/><rect x="13.00" y="0" width="1.900" height="2.600" fill="#1c1c1c"/></svg>
<svg style="left:807px;top:334.7px" width="16" height="16" viewBox="0 0 16 16" ><circle cx="8" cy="8" r="3.900" fill="none" stroke="#d4d4d4" stroke-width="1"/><circle cx="8" cy="8" r="1.300" fill="#d4d4d4"/><path d="M8 .8v14.400M.8 8h14.400M2.900 2.900l10.200 10.200M13.100 2.900L2.900 13.100" stroke="#d4d4d4" stroke-width=".9"/></svg>
<div style="left:801px;top:354.3px;width:28px;height:1.6px;background:#2f2f2f"></div>
<!-- panels -->
<div style="left:831px;top:64px;width:193px;height:13.7px;background:#333333"></div>
<div style="left:831px;top:64px;width:35px;height:14.3px;background:#494949;border-right:1px solid #2e2e2e;box-sizing:border-box"></div>
<span class="t b" style="left:835.5px;top:65.25px;color:#f0f0f0;font-size:9.234px;width:33.6374px;overflow:hidden">Layers</span>
<div style="left:866px;top:64.5px;width:20px;height:12.8px;background:#424242;border-right:1px solid #2e2e2e;box-sizing:border-box"></div>
<span class="t b" style="left:871px;top:65.25px;color:#b6b6b6;font-size:9.234px;width:15.9635px;overflow:hidden">Info</span>
<div style="left:886px;top:64.5px;width:26.6px;height:12.8px;background:#424242;border-right:1px solid #2e2e2e;box-sizing:border-box"></div>
<span class="t b" style="left:890.6px;top:65.25px;color:#b6b6b6;font-size:9.234px;width:23.9453px;overflow:hidden">Links</span>
<div style="left:912.6px;top:64.5px;width:37.2px;height:12.8px;background:#424242;border-right:1px solid #2e2e2e;box-sizing:border-box"></div>
<span class="t b" style="left:917px;top:65.25px;color:#b6b6b6;font-size:9.234px;width:36.26px;overflow:hidden">Libraries</span>
<div style="left:949.8px;top:64.5px;width:36.2px;height:12.8px;background:#424242;border-right:1px solid #2e2e2e;box-sizing:border-box"></div>
<span class="t b" style="left:954.3px;top:65.25px;color:#b6b6b6;font-size:9.234px;width:35.0057px;overflow:hidden">Artboards</span>
<svg style="left:1001.6px;top:67.85px" width="11" height="7" viewBox="0 0 11 7" ><path d="M0 2.200h3.200L1.600 4.100z" fill="#c0c0c0"/><path d="M4.400 .9h5.400M4.400 3.300h5.400M4.400 5.700h5.400" stroke="#b4b4b4" stroke-width="1"/></svg>
<div style="left:835.5px;top:82px;width:175.8px;height:130.6px;background:#474747;border:1px solid #333;box-sizing:border-box"></div>
<div style="left:836px;top:82.5px;width:174.8px;height:15.2px;background:#5a6479"></div>
<div style="left:851px;top:82.5px;width:0.8px;height:15.2px;background:#4a5366"></div>
<div style="left:866px;top:82.5px;width:0.8px;height:15.2px;background:#4a5366"></div>
<div style="left:985px;top:82.5px;width:0.8px;height:15.2px;background:#4a5366"></div>
<svg style="left:838.5px;top:86.5px" width="10" height="7" viewBox="0 0 10 7" ><path d="M.5 3.600C2.400.8 7.600.8 9.500 3.600 7.600 6.400 2.400 6.400.5 3.600z" fill="none" stroke="#e0e0e0" stroke-width=".9"/><circle cx="5.400" cy="3.200" r="1.700" fill="#e0e0e0"/></svg>
<div style="left:867.8px;top:83px;width:2.2px;height:14.4px;background:#4f8ee0"></div>
<div style="left:887.9px;top:83.4px;width:12.8px;height:12.9px;background:#fff;border:1px solid #3a3a3a;box-sizing:border-box"></div>
<span class="t" style="left:905px;top:84.3px;color:#f0f0f0;font-size:8.892px">Layer 1</span>
<div style="left:990px;top:87.2px;width:6px;height:6px;border:1px solid #ddd;border-radius:50%;box-sizing:border-box"></div>
<svg style="left:1007.6px;top:82.5px" width="3.2" height="3.2" viewBox="0 0 3.2 3.2" ><path d="M0 0h3.200v3.200z" fill="#eee"/></svg>
<span class="t" style="left:835.2px;top:215.2px;color:#e6e6e6;font-size:8.892px">1 Layer</span>
<svg style="left:908px;top:216px" width="10" height="10" viewBox="0 0 10 10" ><circle cx="6" cy="3.800" r="2.800" fill="none" stroke="#6c6c6c" stroke-width="1"/><path d="M4 6L.8 9.400" stroke="#6c6c6c" stroke-width="1.200"/></svg>
<svg style="left:927px;top:216.5px" width="10" height="10" viewBox="0 0 10 10" ><rect x=".5" y=".5" width="6.400" height="6.400" fill="none" stroke="#6c6c6c" stroke-width=".9"/><rect x="3" y="3" width="6" height="6" fill="#5a5a5a" stroke="#6c6c6c" stroke-width=".9"/></svg>
<svg style="left:945.5px;top:216.5px" width="13" height="10" viewBox="0 0 13 10" ><path d="M5 1.600h7.400v7.200H8.800V5.400H5z" fill="#d8d8d8"/><path d="M.6 1v2.600h2.800M2.400 2.400l1.200 1.200-1.200 1.200" fill="none" stroke="#d8d8d8" stroke-width="1"/></svg>
<svg style="left:966.5px;top:217px" width="9" height="9" viewBox="0 0 9 9" ><path d="M.4 .4h8.200v8.200H4V4.800H.4z" fill="#d8d8d8"/><path d="M.8 5.400l2.800 2.800" stroke="#d8d8d8" stroke-width=".8"/></svg>
<svg style="left:985.8px;top:216px" width="9" height="10" viewBox="0 0 9 10" ><path d="M.4 2.200h8.200M3.200 2V.6h2.600V2" fill="none" stroke="#6c6c6c" stroke-width=".9"/><path d="M1.400 3.200h6.200l-.6 6.300H2z" fill="none" stroke="#6c6c6c" stroke-width=".9"/></svg>
<svg style="left:1005.5px;top:221px" width="6" height="6" viewBox="0 0 6 6" ><path d="M5 0v1M5 2.400v1M5 4.800v1M2.600 2.400v1M2.600 4.800v1M.2 4.800v1" stroke="#2a2a2a" stroke-width="1.200"/></svg>
<div style="left:831px;top:227.8px;width:193px;height:2.2px;background:#2c2c2c"></div>
<div style="left:831px;top:229.8px;width:193px;height:12.4px;background:#333333"></div>
<div style="left:831px;top:229.8px;width:45.8px;height:13px;background:#494949;border-right:1px solid #2e2e2e;box-sizing:border-box"></div>
<span class="t b" style="left:835.8px;top:230.4px;color:#f0f0f0;font-size:9.234px;width:45.61px;overflow:hidden">Swatches</span>
<div style="left:876.8px;top:230.3px;width:56.4px;height:11.5px;background:#424242;border-right:1px solid #2e2e2e;box-sizing:border-box"></div>
<span class="t b" style="left:882px;top:230.4px;color:#b6b6b6;font-size:9.234px;width:57.2406px;overflow:hidden">Appearance</span>
<svg style="left:1001.6px;top:233px" width="11" height="7" viewBox="0 0 11 7" ><path d="M0 2.200h3.200L1.600 4.100z" fill="#c0c0c0"/><path d="M4.400 .9h5.400M4.400 3.300h5.400M4.400 5.700h5.400" stroke="#b4b4b4" stroke-width="1"/></svg>
<div style="left:843px;top:254.9px;width:14px;height:14.1px;background:#111;border:1.100px solid #e4e4e4;box-sizing:border-box"><div style="left:2.7px;top:2.7px;width:6.5px;height:6.5px;background:#555;border:1px solid #e4e4e4;box-sizing:border-box"></div>
</div>
<div style="left:835.1px;top:247.6px;width:14.3px;height:13.7px;background:#fff;box-shadow:0 0 0 .7px #333"></div>
<div style="left:973.6px;top:248.6px;width:37.2px;height:15.2px;background:#383838;border:1px solid #2c2c2c;box-sizing:border-box"></div>
<div style="left:974.4px;top:249.4px;width:17.6px;height:13.6px;background:#5c5c5c"></div>
<svg style="left:977.6px;top:251.2px" width="11" height="10" viewBox="0 0 11 10" ><path d="M0 1h10.600M0 3.700h10.600M0 6.400h10.600M0 9.100h10.600" stroke="#e0e0e0" stroke-width="1.400"/></svg>
<svg style="left:995.8px;top:250.8px" width="11" height="11" viewBox="0 0 11 11" ><rect x="0" y="0" width="2.900" height="2.900" fill="#e4e4e4"/><rect x="3.7" y="0" width="2.900" height="2.900" fill="#e4e4e4"/><rect x="7.4" y="0" width="2.900" height="2.900" fill="#e4e4e4"/><rect x="0" y="3.7" width="2.900" height="2.900" fill="#e4e4e4"/><rect x="3.7" y="3.7" width="2.900" height="2.900" fill="#e4e4e4"/><rect x="7.4" y="3.7" width="2.900" height="2.900" fill="#e4e4e4"/><rect x="0" y="7.4" width="2.900" height="2.900" fill="#e4e4e4"/><rect x="3.7" y="7.4" width="2.900" height="2.900" fill="#e4e4e4"/><rect x="7.4" y="7.4" width="2.900" height="2.900" fill="#e4e4e4"/></svg>
<svg style="left:835px;top:273.8px" width="166.6" height="34" viewBox="0 0 166.6 34" ><rect x="0" y="0" width="166.600" height="34" fill="#3e3e3e"/><defs><linearGradient id="sgw"><stop offset=".15" stop-color="#fff"/><stop offset="1" stop-color="#333"/></linearGradient><linearGradient id="sgy"><stop offset="0" stop-color="#fff200"/><stop offset=".6" stop-color="#f7a010"/><stop offset="1" stop-color="#e8401c"/></linearGradient><linearGradient id="sgb"><stop offset="0" stop-color="#1a70c8"/><stop offset="1" stop-color="#bfe0f4"/></linearGradient><linearGradient id="sg4"><stop offset="0" stop-color="#fff"/><stop offset="1" stop-color="#3a3"/></linearGradient></defs><rect x="0.40" y="0.50" width="9.99" height="9.90" fill="#fff"/><path d="M0.70 10.10L10.09 0.80" stroke="#e8201a" stroke-width="1.400"/><rect x="10.94" y="0.50" width="9.99" height="9.90" fill="#fff"/><g transform="translate(10.94,0.50)" fill="none" stroke="#333" stroke-width=".7"><circle cx="5" cy="5" r="3.400"/><circle cx="5" cy="5" r="1.600"/><path d="M5 .4v9.200M.4 5h9.200"/></g><rect x="21.48" y="0.50" width="9.99" height="9.90" fill="#d0d0d0"/><rect x="22.08" y="1.10" width="8.79" height="8.70" fill="#555"/><rect x="22.98" y="2.00" width="6.99" height="6.90" fill="#fff"/><rect x="32.02" y="0.50" width="9.99" height="9.90" fill="#000000"/><rect x="42.56" y="0.50" width="9.99" height="9.90" fill="#e3141a"/><rect x="53.10" y="0.50" width="9.99" height="9.90" fill="#fff112"/><rect x="63.64" y="0.50" width="9.99" height="9.90" fill="#0a9c47"/><rect x="74.18" y="0.50" width="9.99" height="9.90" fill="#13a0e6"/><rect x="84.72" y="0.50" width="9.99" height="9.90" fill="#20258f"/><rect x="95.26" y="0.50" width="9.99" height="9.90" fill="#e4097f"/><rect x="105.80" y="0.50" width="9.99" height="9.90" fill="#d0142e"/><rect x="116.34" y="0.50" width="9.99" height="9.90" fill="#e83a2c"/><rect x="126.88" y="0.50" width="9.99" height="9.90" fill="#ee6a1b"/><rect x="137.42" y="0.50" width="9.99" height="9.90" fill="#f7960e"/><rect x="147.96" y="0.50" width="9.99" height="9.90" fill="#fbb321"/><rect x="0.40" y="10.95" width="9.99" height="9.90" fill="#fef200"/><rect x="10.94" y="10.95" width="9.99" height="9.90" fill="#e0e01a"/><rect x="21.48" y="10.95" width="9.99" height="9.90" fill="#8fc52b"/><rect x="32.02" y="10.95" width="9.99" height="9.90" fill="#1aa74a"/><rect x="42.56" y="10.95" width="9.99" height="9.90" fill="#0a9646"/><rect x="53.10" y="10.95" width="9.99" height="9.90" fill="#04693a"/><rect x="63.64" y="10.95" width="9.99" height="9.90" fill="#10a76d"/><rect x="74.18" y="10.95" width="9.99" height="9.90" fill="#0aa69c"/><rect x="84.72" y="10.95" width="9.99" height="9.90" fill="#1a9fe0"/><rect x="95.26" y="10.95" width="9.99" height="9.90" fill="#0d72bd"/><rect x="105.80" y="10.95" width="9.99" height="9.90" fill="#17339c"/><rect x="116.34" y="10.95" width="9.99" height="9.90" fill="#1a2371"/><rect x="126.88" y="10.95" width="9.99" height="9.90" fill="#6a2090"/><rect x="137.42" y="10.95" width="9.99" height="9.90" fill="#a0128b"/><rect x="147.96" y="10.95" width="9.99" height="9.90" fill="#bf0c62"/><rect x="0.40" y="21.40" width="9.99" height="9.90" fill="#e0105a"/><rect x="10.94" y="21.40" width="9.99" height="9.90" fill="#e4147e"/><rect x="21.48" y="21.40" width="9.99" height="9.90" fill="#d8c09c"/><rect x="32.02" y="21.40" width="9.99" height="9.90" fill="#a89078"/><rect x="42.56" y="21.40" width="9.99" height="9.90" fill="#877660"/><rect x="53.10" y="21.40" width="9.99" height="9.90" fill="#6e5140"/><rect x="63.64" y="21.40" width="9.99" height="9.90" fill="#d09a5c"/><rect x="74.18" y="21.40" width="9.99" height="9.90" fill="#c88a44"/><rect x="84.72" y="21.40" width="9.99" height="9.90" fill="#a4672e"/><rect x="95.26" y="21.40" width="9.99" height="9.90" fill="#8a5220"/><rect x="105.80" y="21.40" width="9.99" height="9.90" fill="#784212"/><rect x="116.34" y="21.40" width="9.99" height="9.90" fill="#562e12"/><rect x="126.88" y="21.40" width="9.99" height="9.90" fill="url(#sgw)"/><rect x="137.42" y="21.40" width="9.99" height="9.90" fill="url(#sgy)"/><rect x="147.96" y="21.40" width="9.99" height="9.90" fill="url(#sgb)"/><rect x=".4" y="31.850" width="9.990" height="2.150" fill="#000"/><rect x="10.94" y="31.850" width="9.990" height="2.150" fill="url(#sg4)"/><rect x="21.48" y="31.850" width="9.990" height="2.150" fill="#a86a2c"/></svg>
<div style="left:1002px;top:273.8px;width:9.7px;height:34px;background:#383838;border:1px solid #2c2c2c;box-sizing:border-box"></div>
<svg style="left:1004.2px;top:277.6px" width="5.4" height="3.6" viewBox="0 0 5.4 3.6" ><path d="M0 3.600h5.400L2.700 0z" fill="#e4e4e4"/></svg>
<svg style="left:1004.2px;top:300.2px" width="5.4" height="3.6" viewBox="0 0 5.4 3.6" ><path d="M0 0h5.400L2.700 3.600z" fill="#e4e4e4"/></svg>
<svg style="left:836.5px;top:310px" width="14" height="10" viewBox="0 0 14 10" ><path d="M1 1.400v7.800M3.400 1.400v7.800" stroke="#b6b6b6" stroke-width="1.200"/><path d="M5 2l3.200 7" stroke="#b6b6b6" stroke-width="1.300"/><path d="M9.600 7.400h3.400L11.300 9.400z" fill="#b6b6b6"/></svg>
<svg style="left:859.5px;top:310.6px" width="9" height="9" viewBox="0 0 9 9" ><path d="M6.800 1.400L2 4.500l4.800 3.100" fill="none" stroke="#b6b6b6" stroke-width="1"/><circle cx="7" cy="1.500" r="1.400" fill="#b6b6b6"/><circle cx="1.800" cy="4.500" r="1.400" fill="#b6b6b6"/><circle cx="7" cy="7.500" r="1.400" fill="#b6b6b6"/></svg>
<svg style="left:876.5px;top:310.3px" width="13" height="9.4" viewBox="0 0 13 9.4" ><path d="M3.200 9C.2 9-.2 5.200 2.600 4.600 2.800 1.600 6.800.4 8.400 3c2.800-.6 4.600 2.800 2.600 5-.6.700-1.400 1-2.200 1z" fill="#b6b6b6"/><path d="M4.600 6.400a1.600 1.600 0 1 1 1.900 0 1.600 1.600 0 1 1 1.900-1.400" fill="none" stroke="#494949" stroke-width=".9"/></svg>
<svg style="left:904.8px;top:310.2px" width="15" height="10.4" viewBox="0 0 15 10.4" ><rect x=".5" y=".5" width="8.200" height="8.200" fill="#8a8a8a" stroke="#b6b6b6" stroke-width=".9"/><path d="M.5 4.600h8.200M4.600 .5v8.200" stroke="#b6b6b6" stroke-width=".8"/><rect x="1.200" y="1.200" width="3" height="3" fill="#b6b6b6"/><path d="M10.600 7.800h3.600l-1.800 2.200z" fill="#b6b6b6"/></svg>
<svg style="left:927px;top:310.6px" width="9.6" height="8.8" viewBox="0 0 9.6 8.8" ><rect x=".5" y=".5" width="8.600" height="7.800" fill="#6a6a6a" stroke="#b6b6b6" stroke-width=".9"/><path d="M.5 2.800h8.600M3.400 2.800v5.500M6.300 2.800v5.500M.5 5.600h8.600" stroke="#b6b6b6" stroke-width=".7"/></svg>
<svg style="left:946.4px;top:310.8px" width="11" height="8.6" viewBox="0 0 11 8.6" ><path d="M.3 1.200c0-.5.300-.8.800-.8h2.800l1 1.400h5c.5 0 .8.300.8.800v5.200c0 .5-.3.800-.8.800H1.100c-.5 0-.8-.3-.8-.8z" fill="#b6b6b6"/></svg>
<svg style="left:966.5px;top:310.8px" width="9" height="9" viewBox="0 0 9 9" ><path d="M.4 .4h8.200v8.200H4V4.800H.4z" fill="#b6b6b6"/><path d="M.8 5.400l2.800 2.800" stroke="#b6b6b6" stroke-width=".8"/></svg>
<svg style="left:985.8px;top:310px" width="9" height="10" viewBox="0 0 9 10" ><path d="M.4 2.200h8.200M3.200 2V.6h2.600V2" fill="none" stroke="#b6b6b6" stroke-width=".9"/><path d="M1.400 3.200h6.200l-.6 6.300H2z" fill="none" stroke="#b6b6b6" stroke-width=".9"/><path d="M3.400 4.400v4M5.600 4.400v4" stroke="#b6b6b6" stroke-width=".7"/></svg>
<svg style="left:1005.5px;top:315px" width="6" height="6" viewBox="0 0 6 6" ><path d="M5 0v1M5 2.400v1M5 4.800v1M2.600 2.400v1M2.600 4.800v1M.2 4.800v1" stroke="#2a2a2a" stroke-width="1.200"/></svg>
<div style="left:831px;top:321.8px;width:193px;height:2.2px;background:#2c2c2c"></div>
<div style="left:831px;top:324.3px;width:193px;height:12.9px;background:#333333"></div>
<div style="left:831px;top:324.8px;width:63px;height:12px;background:#424242;border-right:1px solid #2e2e2e;box-sizing:border-box"></div>
<span class="t b" style="left:836.4px;top:325.15px;color:#b6b6b6;font-size:9.234px;width:64.5382px;overflow:hidden">Transparency</span>
<div style="left:894px;top:324.3px;width:36px;height:13.5px;background:#494949;border-right:1px solid #2e2e2e;box-sizing:border-box"></div>
<span class="t b" style="left:904.2px;top:325.15px;color:#f0f0f0;font-size:9.234px;width:28.2782px;overflow:hidden">Color</span>
<svg style="left:1001.6px;top:327.75px" width="11" height="7" viewBox="0 0 11 7" ><path d="M0 2.200h3.200L1.600 4.100z" fill="#c0c0c0"/><path d="M4.400 .9h5.400M4.400 3.300h5.400M4.400 5.700h5.400" stroke="#b4b4b4" stroke-width="1"/></svg>
<svg style="left:897.6px;top:327.2px" width="4.4" height="7.4" viewBox="0 0 4.4 7.4" ><path d="M.3 2.800L2.200 .3l1.900 2.500M.3 4.600l1.900 2.500 1.900-2.500" fill="none" stroke="#d8d8d8" stroke-width=".9"/></svg>
<div style="left:838.4px;top:346.8px;width:5.6px;height:5.6px;background:#1c1c1c;border:.8px solid #ddd;box-sizing:border-box"></div>
<div style="left:835.4px;top:343.8px;width:5.8px;height:5.8px;background:#fff;border:.8px solid #222;box-sizing:border-box"></div>
<svg style="left:850px;top:342.8px" width="8" height="8.5" viewBox="0 0 8 8.5" ><path d="M1.400 1.600c2.600-.4 4.400 1.400 4.200 4" fill="none" stroke="#cfcfcf" stroke-width="1"/><path d="M0 1.600L2.400 0v3.200zM3.800 5h3.800L5.700 7.600z" fill="#cfcfcf"/></svg>
<div style="left:843px;top:363.7px;width:14px;height:14.2px;background:#111;border:1.100px solid #e4e4e4;box-sizing:border-box"><div style="left:2.7px;top:2.7px;width:6.5px;height:6.5px;background:#555;border:1px solid #e4e4e4;box-sizing:border-box"></div>
</div>
<div style="left:835.1px;top:356.3px;width:14.3px;height:13.9px;background:#fff;box-shadow:0 0 0 .7px #333"></div>
<span class="t" style="left:870.3px;top:346.4px;color:#dcdcdc;font-size:9.576px">C</span>
<svg style="left:884px;top:349.5px" width="85" height="5" viewBox="0 0 85 5" ><defs><linearGradient id="slC"><stop offset="0" stop-color="#fff"/><stop offset="1" stop-color="#00a0e9"/></linearGradient></defs><rect x=".2" y=".3" width="84.400" height="4.300" rx=".8" fill="#333"/><rect x=".6" y=".8" width="83.600" height="3.200" rx=".5" fill="url(#slC)"/></svg>
<svg style="left:881.6px;top:354.1px" width="5.6" height="4.6" viewBox="0 0 5.6 4.6" ><path d="M0 4.600h5.600L2.800 0z" fill="#c8c8c8" stroke="#555" stroke-width=".4"/></svg>
<div style="left:974px;top:345.6px;width:24.4px;height:12.4px;background:#a2a2a2;border:1px solid #2c2c2c;box-sizing:border-box"></div>
<span class="t" style="left:977.2px;top:345.7px;color:#1a1a1a;font-size:9.576px">0</span>
<span class="t b" style="left:1000.4px;top:346.4px;color:#e2e2e2;font-size:8.436px">%</span>
<span class="t" style="left:870.3px;top:365.1px;color:#dcdcdc;font-size:9.576px">M</span>
<svg style="left:884px;top:368.2px" width="85" height="5" viewBox="0 0 85 5" ><defs><linearGradient id="slM"><stop offset="0" stop-color="#fff"/><stop offset="1" stop-color="#e4007f"/></linearGradient></defs><rect x=".2" y=".3" width="84.400" height="4.300" rx=".8" fill="#333"/><rect x=".6" y=".8" width="83.600" height="3.200" rx=".5" fill="url(#slM)"/></svg>
<svg style="left:881.6px;top:372.8px" width="5.6" height="4.6" viewBox="0 0 5.6 4.6" ><path d="M0 4.600h5.600L2.800 0z" fill="#c8c8c8" stroke="#555" stroke-width=".4"/></svg>
<div style="left:974px;top:364.3px;width:24.4px;height:12.4px;background:#a2a2a2;border:1px solid #2c2c2c;box-sizing:border-box"></div>
<span class="t" style="left:977.2px;top:364.4px;color:#1a1a1a;font-size:9.576px">0</span>
<span class="t b" style="left:1000.4px;top:365.1px;color:#e2e2e2;font-size:8.436px">%</span>
<span class="t" style="left:870.3px;top:384px;color:#dcdcdc;font-size:9.576px">Y</span>
<svg style="left:884px;top:387.1px" width="85" height="5" viewBox="0 0 85 5" ><defs><linearGradient id="slY"><stop offset="0" stop-color="#fff"/><stop offset="1" stop-color="#fff100"/></linearGradient></defs><rect x=".2" y=".3" width="84.400" height="4.300" rx=".8" fill="#333"/><rect x=".6" y=".8" width="83.600" height="3.200" rx=".5" fill="url(#slY)"/></svg>
<svg style="left:881.6px;top:391.7px" width="5.6" height="4.6" viewBox="0 0 5.6 4.6" ><path d="M0 4.600h5.600L2.800 0z" fill="#c8c8c8" stroke="#555" stroke-width=".4"/></svg>
<div style="left:974px;top:383.2px;width:24.4px;height:12.4px;background:#a2a2a2;border:1px solid #2c2c2c;box-sizing:border-box"></div>
<span class="t" style="left:977.2px;top:383.3px;color:#1a1a1a;font-size:9.576px">0</span>
<span class="t b" style="left:1000.4px;top:384px;color:#e2e2e2;font-size:8.436px">%</span>
<span class="t" style="left:870.3px;top:402.6px;color:#dcdcdc;font-size:9.576px">K</span>
<svg style="left:884px;top:405.7px" width="85" height="5" viewBox="0 0 85 5" ><defs><linearGradient id="slK"><stop offset="0" stop-color="#fff"/><stop offset="1" stop-color="#1a1a1a"/></linearGradient></defs><rect x=".2" y=".3" width="84.400" height="4.300" rx=".8" fill="#333"/><rect x=".6" y=".8" width="83.600" height="3.200" rx=".5" fill="url(#slK)"/></svg>
<svg style="left:881.6px;top:410.3px" width="5.6" height="4.6" viewBox="0 0 5.6 4.6" ><path d="M0 4.600h5.600L2.800 0z" fill="#c8c8c8" stroke="#555" stroke-width=".4"/></svg>
<div style="left:974px;top:401.8px;width:24.4px;height:12.4px;background:#a2a2a2;border:1px solid #2c2c2c;box-sizing:border-box"></div>
<span class="t" style="left:977.2px;top:401.9px;color:#1a1a1a;font-size:9.576px">0</span>
<span class="t b" style="left:1000.4px;top:402.6px;color:#e2e2e2;font-size:8.436px">%</span>
<div style="left:835.1px;top:424.3px;width:9.9px;height:9.6px;background:linear-gradient(135deg,#fff 43%,#e21 43%,#e21 57%,#fff 57%)"></div>
<div style="left:845px;top:424.3px;width:9.8px;height:9.6px;background:#050505"></div>
<div style="left:854.8px;top:424.3px;width:9.8px;height:9.6px;background:#fff"></div>
<div style="left:836px;top:442.8px;width:166.5px;height:15.9px;background:linear-gradient(180deg,rgba(255,255,255,1) 0%,rgba(255,255,255,0) 45%,rgba(0,0,0,0) 55%,rgba(0,0,0,1) 100%),linear-gradient(90deg,#e8202a 0%,#f7931e 9%,#fff200 18%,#8cc63f 27%,#00a651 38%,#00a99d 48%,#00aeef 56%,#2e3192 68%,#92278f 78%,#ec008c 88%,#ed1c24 100%);box-shadow:0 0 0 .6px #2a2a2a"></div>
<svg style="left:1005.5px;top:457.5px" width="6" height="6" viewBox="0 0 6 6" ><path d="M5 0v1M5 2.400v1M5 4.800v1M2.600 2.400v1M2.600 4.800v1M.2 4.800v1" stroke="#2a2a2a" stroke-width="1.200"/></svg>
<div style="left:831px;top:464.2px;width:193px;height:2.2px;background:#2c2c2c"></div>
<div style="left:831px;top:466.8px;width:193px;height:11.9px;background:#333333"></div>
<div style="left:831px;top:466.8px;width:88px;height:12.5px;background:#494949;border-right:1px solid #2e2e2e;box-sizing:border-box"></div>
<span class="t b" style="left:835.8px;top:467.15px;color:#f0f0f0;font-size:9.234px;width:93.7286px;overflow:hidden">Separations Preview</span>
<div style="left:835.5px;top:484.5px;width:9.1px;height:8.7px;background:#606060;border:1px solid #2e2e2e;box-sizing:border-box"></div>
<span class="t" style="left:847.5px;top:482.9px;color:#e4e4e4;font-size:9.291px">Overprint Preview</span>
<div style="left:835.5px;top:498.4px;width:175.8px;height:79.6px;background:#474747;border:1px solid #343434;box-sizing:border-box"></div>
<svg style="left:838.3px;top:503px" width="10" height="7" viewBox="0 0 10 7" ><path d="M.5 3.600C2.400.8 7.600.8 9.500 3.600 7.600 6.400 2.400 6.400.5 3.600z" fill="none" stroke="#5e5e5e" stroke-width=".9"/><circle cx="5.400" cy="3.200" r="1.700" fill="#5e5e5e"/></svg>
<div style="left:854.5px;top:502.6px;width:7.7px;height:7.7px;background:conic-gradient(from 45deg,#4a4a4a 0 25%,#a89a3a 0 50%,#3a7a62 0 75%,#7a4a7a 0);box-shadow:0 0 0 .5px #333"></div>
<span class="t" style="left:865.6px;top:500.9px;color:#8c8c8c;font-size:8.778px">CMYK</span>
<div style="left:836px;top:514.1px;width:174.8px;height:0.9px;background:#353535"></div>
<svg style="left:838.3px;top:518.9px" width="10" height="7" viewBox="0 0 10 7" ><path d="M.5 3.600C2.400.8 7.600.8 9.500 3.600 7.600 6.400 2.400 6.400.5 3.600z" fill="none" stroke="#5e5e5e" stroke-width=".9"/><circle cx="5.400" cy="3.200" r="1.700" fill="#5e5e5e"/></svg>
<div style="left:854.5px;top:518.5px;width:7.7px;height:7.7px;background:#14a0e4;box-shadow:0 0 0 .5px #333"></div>
<span class="t" style="left:865.6px;top:516.8px;color:#8c8c8c;font-size:8.778px">Cyan</span>
<div style="left:836px;top:530px;width:174.8px;height:0.9px;background:#353535"></div>
<svg style="left:838.3px;top:534.8px" width="10" height="7" viewBox="0 0 10 7" ><path d="M.5 3.600C2.400.8 7.600.8 9.500 3.600 7.600 6.400 2.400 6.400.5 3.600z" fill="none" stroke="#5e5e5e" stroke-width=".9"/><circle cx="5.400" cy="3.200" r="1.700" fill="#5e5e5e"/></svg>
<div style="left:854.5px;top:534.4px;width:7.7px;height:7.7px;background:#e2127c;box-shadow:0 0 0 .5px #333"></div>
<span class="t" style="left:865.6px;top:532.7px;color:#8c8c8c;font-size:8.778px">Magenta</span>
<div style="left:836px;top:545.9px;width:174.8px;height:0.9px;background:#353535"></div>
<svg style="left:838.3px;top:550.7px" width="10" height="7" viewBox="0 0 10 7" ><path d="M.5 3.600C2.400.8 7.600.8 9.500 3.600 7.600 6.400 2.400 6.400.5 3.600z" fill="none" stroke="#5e5e5e" stroke-width=".9"/><circle cx="5.400" cy="3.200" r="1.700" fill="#5e5e5e"/></svg>
<div style="left:854.5px;top:550.3px;width:7.7px;height:7.7px;background:#fbf01c;box-shadow:0 0 0 .5px #333"></div>
<span class="t" style="left:865.6px;top:548.6px;color:#8c8c8c;font-size:8.778px">Yellow</span>
<div style="left:836px;top:561.8px;width:174.8px;height:0.9px;background:#353535"></div>
<svg style="left:838.3px;top:566.6px" width="10" height="7" viewBox="0 0 10 7" ><path d="M.5 3.600C2.400.8 7.600.8 9.500 3.600 7.600 6.400 2.400 6.400.5 3.600z" fill="none" stroke="#5e5e5e" stroke-width=".9"/><circle cx="5.400" cy="3.200" r="1.700" fill="#5e5e5e"/></svg>
<div style="left:854.5px;top:566.2px;width:7.7px;height:7.7px;background:#050505;box-shadow:0 0 0 .5px #333"></div>
<span class="t" style="left:865.6px;top:564.5px;color:#8c8c8c;font-size:8.778px">Black</span>
<div style="left:850.7px;top:498.8px;width:0.8px;height:78.8px;background:#383838"></div>
<div style="left:835.5px;top:583.6px;width:9.1px;height:8.7px;background:#4f4f4f;border:1px solid #3a3a3a;box-sizing:border-box"></div>
<span class="t" style="left:847.5px;top:581.9px;color:#808080;font-size:9.063px">Show Used Spot Colors Only</span>
<svg style="left:1005.5px;top:590.5px" width="6" height="6" viewBox="0 0 6 6" ><path d="M5 0v1M5 2.400v1M5 4.800v1M2.600 2.400v1M2.600 4.800v1M.2 4.800v1" stroke="#2a2a2a" stroke-width="1.200"/></svg>
<div style="left:831px;top:597.2px;width:193px;height:2.2px;background:#2c2c2c"></div>
<div style="left:831px;top:599.6px;width:193px;height:11.6px;background:#333333"></div>
<div style="left:831px;top:599.6px;width:67.4px;height:12.2px;background:#494949;border-right:1px solid #2e2e2e;box-sizing:border-box"></div>
<span class="t b" style="left:836px;top:599.8px;color:#f0f0f0;font-size:9.234px;width:70.0114px;overflow:hidden">Document Info</span>
<div style="left:898.4px;top:600.1px;width:49.2px;height:10.7px;background:#424242;border-right:1px solid #2e2e2e;box-sizing:border-box"></div>
<span class="t b" style="left:903.4px;top:599.8px;color:#b6b6b6;font-size:9.234px;width:49.2588px;overflow:hidden">Attributes</span>
<svg style="left:1001.6px;top:602.4px" width="11" height="7" viewBox="0 0 11 7" ><path d="M0 2.200h3.200L1.600 4.100z" fill="#c0c0c0"/><path d="M4.400 .9h5.400M4.400 3.300h5.400M4.400 5.700h5.400" stroke="#b4b4b4" stroke-width="1"/></svg>
<span class="t" style="left:836.3px;top:617.4px;color:#f0f0f0;font-size:9.234px">Document:</span>
<span class="t" style="left:836.3px;top:635.3px;color:#f0f0f0;font-size:9.234px">Name: Untitled-1</span>
<span class="t" style="left:836.3px;top:652.8px;color:#f0f0f0;font-size:9.234px">Color Mode: CMYK color</span>
<span class="t" style="left:836.3px;top:662px;color:#f0f0f0;font-size:9.234px">Color Profile: Japan Color 2001 Coated</span>
<span class="t" style="left:836.3px;top:671px;color:#f0f0f0;font-size:9.234px">Ruler Units: millimeters</span>
<span class="t" style="left:836.3px;top:680px;color:#f0f0f0;font-size:9.633px">Artboard Dimensions: 99.9984 mm x</span>
<span class="t" style="left:836.3px;top:689.1px;color:#f0f0f0;font-size:9.861px">148.0009 mm</span>
<span class="t" style="left:836.3px;top:698px;color:#f0f0f0;font-size:9.234px">Show Images in Outline Mode: OFF</span>
<span class="t" style="left:836.3px;top:707px;color:#f0f0f0;font-size:9.234px">Highlight Substituted Fonts: OFF</span>
<span class="t" style="left:836.3px;top:716.3px;color:#f0f0f0;font-size:9.234px">Highlight Substituted Glyphs: OFF</span>
<span class="t" style="left:836.3px;top:725.3px;color:#f0f0f0;font-size:9.234px">Preserve Text Editability</span>
<span class="t" style="left:836.3px;top:734.4px;color:#f0f0f0;font-size:9.234px">Simulate Colored Paper: OFF</span>
<div style="left:1001px;top:618.6px;width:9px;height:167.4px;background:#353535;border:1px solid #2a2a2a;box-sizing:border-box"></div>
<div style="left:1002px;top:629.6px;width:7px;height:141.8px;background:#8e8e8e"></div>
<svg style="left:1002.8px;top:622.4px" width="5.4" height="3.6" viewBox="0 0 5.4 3.6" ><path d="M0 3.600h5.400L2.700 0z" fill="#e8e8e8"/></svg>
<svg style="left:1002.8px;top:777.2px" width="5.4" height="3.6" viewBox="0 0 5.4 3.6" ><path d="M0 0h5.400L2.700 3.600z" fill="#e8e8e8"/></svg>
<div style="left:1013.5px;top:56px;width:3px;height:751px;background:linear-gradient(90deg,#494949,#3a3a3a)"></div>
<svg style="left:0px;top:0px" width="1024" height="815" viewBox="0 0 1024 815" ><path d="M8 808V9.500a5 5 0 0 1 5-5H1011a5 5 0 0 1 5 5V808" fill="none" stroke="rgba(16,16,16,.6)" stroke-width="1"/></svg>
</div>
</body></html>
